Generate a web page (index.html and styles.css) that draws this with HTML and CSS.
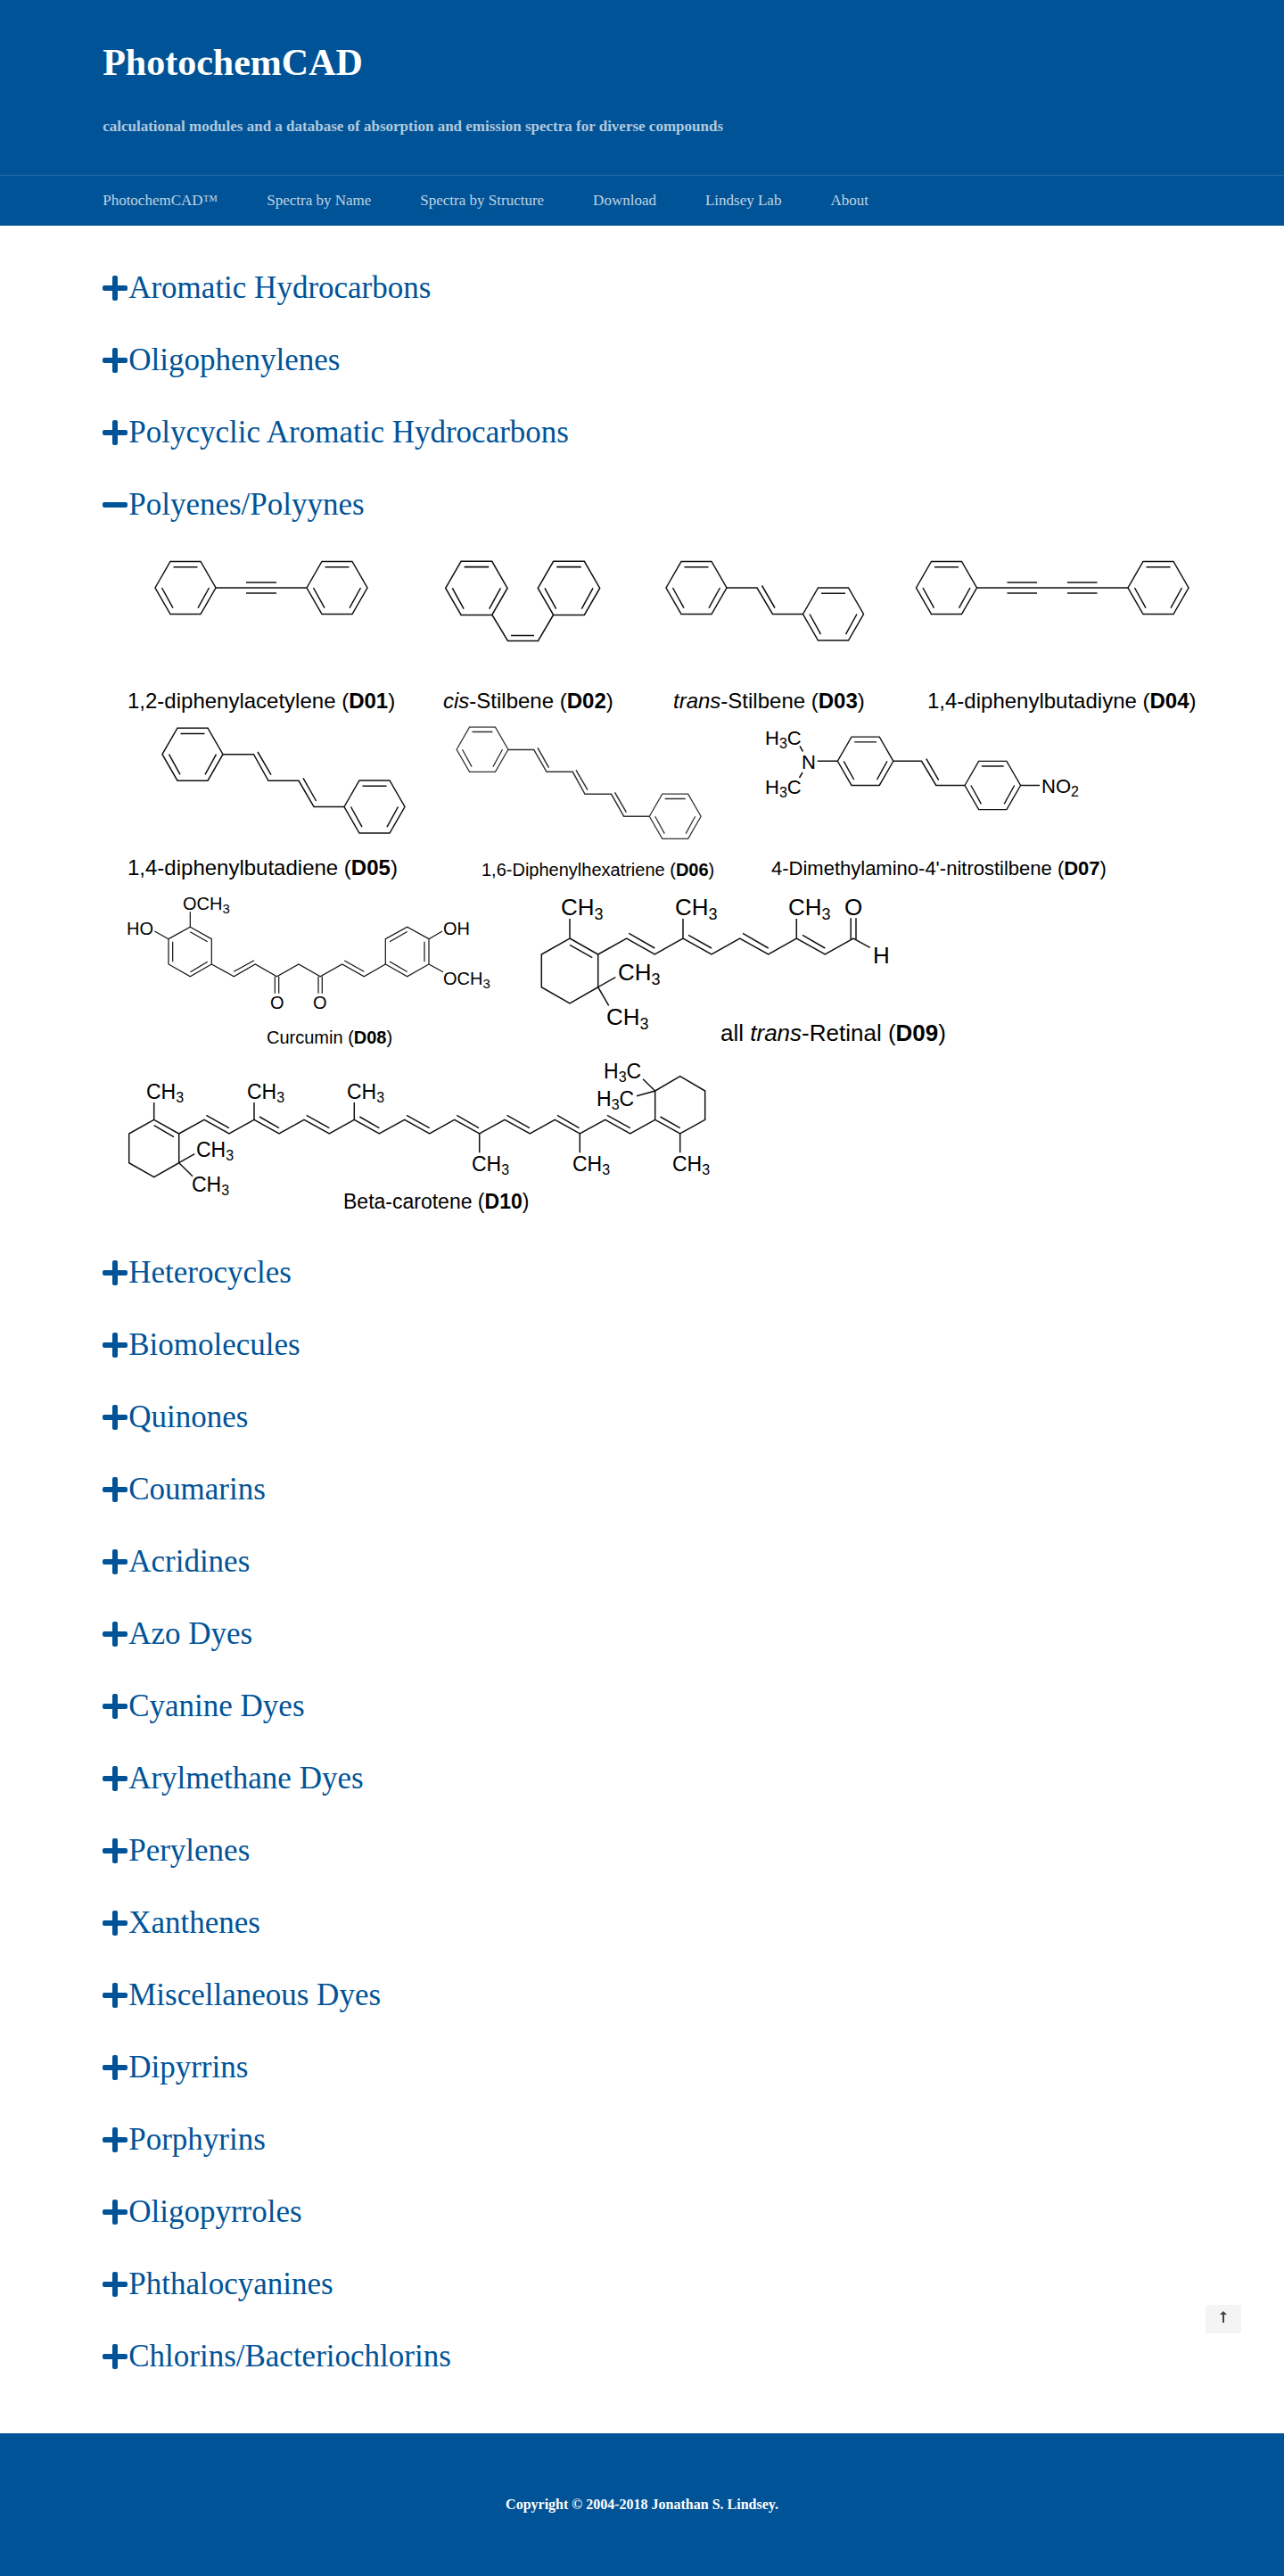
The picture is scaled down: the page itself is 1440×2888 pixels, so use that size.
FILE: index.html
```html
<!DOCTYPE html>
<html lang="en">
<head>
<meta charset="utf-8">
<meta name="viewport" content="width=device-width, initial-scale=1">
<title>PhotochemCAD – Spectra by Structure</title>
<link rel="stylesheet" href="styles.css">
</head>
<body>
<svg class="defs" width="0" height="0" aria-hidden="true">
  <defs>
    <g id="plus"><rect x="0" y="11" width="28" height="6" rx="2"/><rect x="11" y="0" width="6" height="28" rx="2"/></g>
    <g id="minus"><rect x="0" y="11" width="28" height="6" rx="2"/></g>
    <path id="phenyl" d="M-34 0L-17 -29.5H17L34 0L17 29.5H-17ZM-13.5 -23.3H13.5M-26.5 0L-14 22.7M26.5 0L14 22.7"/>
  </defs>
</svg>

<header class="site-header">
  <div class="branding">
    <h1 class="site-title"><a href="#">PhotochemCAD</a></h1>
    <p class="tagline">calculational modules and a database of absorption and emission spectra for diverse compounds</p>
  </div>
  <nav class="site-nav" aria-label="Main">
    <a href="#">PhotochemCAD™</a>
    <a href="#">Spectra by Name</a>
    <a href="#">Spectra by Structure</a>
    <a href="#">Download</a>
    <a href="#">Lindsey Lab</a>
    <a href="#">About</a>
  </nav>
</header>

<main class="content">
  <h2 class="group"><button type="button" aria-expanded="false"><svg class="sign" viewBox="0 0 28 28" aria-hidden="true"><use href="#plus"/></svg>Aromatic Hydrocarbons</button></h2>
  <h2 class="group"><button type="button" aria-expanded="false"><svg class="sign" viewBox="0 0 28 28" aria-hidden="true"><use href="#plus"/></svg>Oligophenylenes</button></h2>
  <h2 class="group"><button type="button" aria-expanded="false"><svg class="sign" viewBox="0 0 28 28" aria-hidden="true"><use href="#plus"/></svg>Polycyclic Aromatic Hydrocarbons</button></h2>
  <h2 class="group"><button type="button" aria-expanded="true" aria-controls="polyenes"><svg class="sign" viewBox="0 0 28 28" aria-hidden="true"><use href="#minus"/></svg>Polyenes/Polyynes</button></h2>

  <div class="gallery" id="polyenes">
    <a href="#"><svg class="mol" width="336" height="189" viewBox="144 618 336 189">
      <use href="#phenyl" x="208" y="659"/><use href="#phenyl" x="378" y="659"/>
      <path d="M242 659H344M276 653H310M276 665H310"/>
      <text class="t24" x="143" y="794">1,2-diphenylacetylene (<tspan class="b">D01</tspan>)</text>
    </svg></a>
    <a href="#"><svg class="mol" width="248" height="189" viewBox="480 618 248 189">
      <use href="#phenyl" transform="translate(534.4 659.4) scale(1.02)"/><use href="#phenyl" transform="translate(638 659.4) scale(1.02)"/>
      <path d="M552 689.5L569.5 718.5H603.5L620.5 689.5M573 712.5H599"/>
      <text class="t24" x="497" y="794"><tspan class="i">cis</tspan>-Stilbene (<tspan class="b">D02</tspan>)</text>
    </svg></a>
    <a href="#"><svg class="mol" width="296" height="189" viewBox="728 618 296 189">
      <use href="#phenyl" x="781" y="659"/><use href="#phenyl" x="934.5" y="688.5"/>
      <path d="M815 659H849L866.5 688.5H900.5M854.5 656.5L869 681.5"/>
      <text class="t24" x="755" y="794"><tspan class="i">trans</tspan>-Stilbene (<tspan class="b">D03</tspan>)</text>
    </svg></a>
    <a href="#"><svg class="mol" width="321" height="189" viewBox="1024 618 321 189">
      <use href="#phenyl" x="1061.5" y="659"/><use href="#phenyl" x="1299" y="659"/>
      <path d="M1095 659H1265M1129.5 653H1163M1129.5 665H1163M1197 653H1230.5M1197 665H1230.5"/>
      <text class="t24" x="1040" y="794">1,4-diphenylbutadiyne (<tspan class="b">D04</tspan>)</text>
    </svg></a>

    <a href="#"><svg class="mol" width="336" height="189" viewBox="144 807 336 189">
      <use href="#phenyl" x="216" y="845.7"/><use href="#phenyl" x="420" y="904.5"/>
      <path d="M250 845.7H284.5L301 875.3H335L352 904.5H386M289 843L304 868.7M340 872.3L354.6 898"/>
      <text class="t24" x="143" y="981">1,4-diphenylbutadiene (<tspan class="b">D05</tspan>)</text>
    </svg></a>
    <a href="#"><svg class="mol soft" width="350" height="189" viewBox="480 807 350 189">
      <use href="#phenyl" transform="translate(541 840.3) scale(.85)"/><use href="#phenyl" transform="translate(757.2 915.3) scale(.85)"/>
      <path d="M570 840.4H598.7L613 865.3H642.3L656 890.3H685.6L699.7 915.3H728.2M603 838.3L615.5 860.7M646 863.3L659 885.6M689.5 888.3L702.4 910.6"/>
      <text class="t20" x="540" y="982">1,6-Diphenylhexatriene (<tspan class="b">D06</tspan>)</text>
    </svg></a>
    <a href="#"><svg class="mol" width="430" height="189" viewBox="830 807 430 189">
      <use href="#phenyl" transform="translate(970.6 853.3) scale(.92)"/><use href="#phenyl" transform="translate(1113.3 880.5) scale(.92)"/>
      <path d="M897 836.5L900.5 842.5M900 866L896.5 872M916.7 853.3H939.2M1002 853.3H1033.5L1049.8 880.5H1082M1038.8 850.7L1052.7 874.7M1145 880.5H1166"/>
      <text class="t22" x="858" y="835">H<tspan class="s16" dy="4">3</tspan><tspan dy="-4">C</tspan></text>
      <text class="t22" x="899" y="862">N</text>
      <text class="t22" x="858" y="890">H<tspan class="s16" dy="4">3</tspan><tspan dy="-4">C</tspan></text>
      <text class="t22" x="1168" y="889">NO<tspan class="s16" dy="4">2</tspan></text>
      <text class="t22" x="865" y="981">4-Dimethylamino-4'-nitrostilbene (<tspan class="b">D07</tspan>)</text>
    </svg></a>

    <a href="#"><svg class="mol thin" width="436" height="189" viewBox="144 996 436 189">
      <path d="M213.3 1039.3L237.3 1052.7V1081L213.3 1094.7L189 1081V1052.7ZM213.3 1044.7L232.7 1055.7M193.7 1055.7V1078.3M213.5 1089.7L232.7 1078.3M213.3 1022.3V1039.3M173.3 1044L189 1052.7"/>
      <path d="M237.3 1081L262.3 1094.7L286.3 1081L310.5 1094.7L335 1081L359.2 1094.7L383.7 1081L408.3 1094.7L432.3 1081M262.3 1089.3L285 1076.7M386.3 1077L408.3 1089.3M308.3 1094.7V1113.7M312.7 1094.7V1113.7M357 1094.7V1113.7M361.3 1094.7V1113.7"/>
      <path d="M432.3 1081V1052.7L456.7 1039.3L481 1052.7V1081L456.7 1094.7ZM437 1055.7L456.7 1044.5M476 1055.7V1078.3M437 1078L456.7 1089.5M481 1052.7L496 1044M481 1081L497 1089.7"/>
      <text class="t20" x="205" y="1020">OCH<tspan class="s15" dy="4">3</tspan></text>
      <text class="t20" x="142" y="1048">HO</text>
      <text class="t20" x="303" y="1131">O</text>
      <text class="t20" x="351" y="1131">O</text>
      <text class="t20" x="497" y="1048">OH</text>
      <text class="t20" x="497" y="1104">OCH<tspan class="s15" dy="4">3</tspan></text>
      <text class="t20" x="299" y="1170">Curcumin (<tspan class="b">D08</tspan>)</text>
    </svg></a>
    <a href="#"><svg class="mol" width="500" height="189" viewBox="580 996 500 189">
      <path d="M639 1052L670.7 1070V1106.7L639 1125L607.3 1106.7V1070ZM639 1059.3L664.3 1073.7M639 1030V1052M690.3 1095.7L670.7 1106.7L682.7 1127.3"/>
      <path d="M670.7 1070L702.7 1052L734.3 1070L766 1052L798 1070L829.7 1052L861.7 1070L893.3 1052L925.3 1070L957 1052L975.7 1062.3M705.3 1046.3L734.3 1063M772 1048.3L798 1063M833 1046.3L861.7 1063M900 1048.3L925.3 1063M766 1030V1052M893.3 1030V1052M954.2 1029.3V1053M960 1029.3V1053"/>
      <text class="t26" x="629" y="1026">CH<tspan class="s18" dy="5">3</tspan></text>
      <text class="t26" x="757" y="1026">CH<tspan class="s18" dy="5">3</tspan></text>
      <text class="t26" x="884" y="1026">CH<tspan class="s18" dy="5">3</tspan></text>
      <text class="t26" x="947" y="1026">O</text>
      <text class="t26" x="979" y="1080">H</text>
      <text class="t26" x="693" y="1099">CH<tspan class="s18" dy="5">3</tspan></text>
      <text class="t26" x="680" y="1149">CH<tspan class="s18" dy="5">3</tspan></text>
      <text class="t26" x="808" y="1167">all <tspan class="i">trans</tspan>-Retinal (<tspan class="b">D09</tspan>)</text>
    </svg></a>

    <a href="#"><svg class="mol" width="670" height="189" viewBox="144 1185 670 189">
      <path d="M172.7 1255.3L200.7 1271V1303.7L172.7 1319.7L144.7 1303.7V1271ZM172.7 1261.7L195 1274.7M172.7 1236V1255.3M218.3 1293.7L200.7 1303.7L216 1318.7"/>
      <path d="M200.7 1271L229 1255.3L257 1271L285 1255.3L313 1271L341 1255.3L369.3 1271L397.3 1255.3L425.3 1271L453.7 1255.3L481.7 1271L509.7 1255.3L537.7 1271L566 1255.3L594.3 1271L622.3 1255.3L650.3 1271L678.7 1255.3L706.7 1271L734.7 1255.3"/>
      <path d="M231.3 1250.3L257 1264.7M291 1252L313 1264.7M343.7 1250.3L369.3 1264.7M403.3 1252L425.3 1264.7M456 1250.3L481.7 1264.7M512.3 1250.3L537 1264.7M568.5 1250.3L594 1264.7M625 1250.3L649.5 1264.7M681 1250.3L706.7 1264.7M740.5 1252L762.7 1264.7"/>
      <path d="M734.7 1255.3V1223L762.7 1206.7L790.7 1223V1255.3L762.7 1271ZM721 1209.7L734.7 1223L714 1228.7M285 1236V1255.3M397.3 1236V1255.3M537.7 1271V1292.3M650.3 1271V1292.3M762.7 1271V1292.3"/>
      <text class="t23" x="164" y="1232">CH<tspan class="s16" dy="4">3</tspan></text>
      <text class="t23" x="277" y="1232">CH<tspan class="s16" dy="4">3</tspan></text>
      <text class="t23" x="389" y="1232">CH<tspan class="s16" dy="4">3</tspan></text>
      <text class="t23" x="220" y="1297">CH<tspan class="s16" dy="4">3</tspan></text>
      <text class="t23" x="215" y="1336">CH<tspan class="s16" dy="4">3</tspan></text>
      <text class="t23" x="529" y="1313">CH<tspan class="s16" dy="4">3</tspan></text>
      <text class="t23" x="642" y="1313">CH<tspan class="s16" dy="4">3</tspan></text>
      <text class="t23" x="754" y="1313">CH<tspan class="s16" dy="4">3</tspan></text>
      <text class="t23" x="677" y="1209">H<tspan class="s16" dy="4">3</tspan><tspan dy="-4">C</tspan></text>
      <text class="t23" x="669" y="1240">H<tspan class="s16" dy="4">3</tspan><tspan dy="-4">C</tspan></text>
      <text class="t23" x="385" y="1355">Beta-carotene (<tspan class="b">D10</tspan>)</text>
    </svg></a>
  </div>

  <h2 class="group"><button type="button" aria-expanded="false"><svg class="sign" viewBox="0 0 28 28" aria-hidden="true"><use href="#plus"/></svg>Heterocycles</button></h2>
  <h2 class="group"><button type="button" aria-expanded="false"><svg class="sign" viewBox="0 0 28 28" aria-hidden="true"><use href="#plus"/></svg>Biomolecules</button></h2>
  <h2 class="group"><button type="button" aria-expanded="false"><svg class="sign" viewBox="0 0 28 28" aria-hidden="true"><use href="#plus"/></svg>Quinones</button></h2>
  <h2 class="group"><button type="button" aria-expanded="false"><svg class="sign" viewBox="0 0 28 28" aria-hidden="true"><use href="#plus"/></svg>Coumarins</button></h2>
  <h2 class="group"><button type="button" aria-expanded="false"><svg class="sign" viewBox="0 0 28 28" aria-hidden="true"><use href="#plus"/></svg>Acridines</button></h2>
  <h2 class="group"><button type="button" aria-expanded="false"><svg class="sign" viewBox="0 0 28 28" aria-hidden="true"><use href="#plus"/></svg>Azo Dyes</button></h2>
  <h2 class="group"><button type="button" aria-expanded="false"><svg class="sign" viewBox="0 0 28 28" aria-hidden="true"><use href="#plus"/></svg>Cyanine Dyes</button></h2>
  <h2 class="group"><button type="button" aria-expanded="false"><svg class="sign" viewBox="0 0 28 28" aria-hidden="true"><use href="#plus"/></svg>Arylmethane Dyes</button></h2>
  <h2 class="group"><button type="button" aria-expanded="false"><svg class="sign" viewBox="0 0 28 28" aria-hidden="true"><use href="#plus"/></svg>Perylenes</button></h2>
  <h2 class="group"><button type="button" aria-expanded="false"><svg class="sign" viewBox="0 0 28 28" aria-hidden="true"><use href="#plus"/></svg>Xanthenes</button></h2>
  <h2 class="group"><button type="button" aria-expanded="false"><svg class="sign" viewBox="0 0 28 28" aria-hidden="true"><use href="#plus"/></svg>Miscellaneous Dyes</button></h2>
  <h2 class="group"><button type="button" aria-expanded="false"><svg class="sign" viewBox="0 0 28 28" aria-hidden="true"><use href="#plus"/></svg>Dipyrrins</button></h2>
  <h2 class="group"><button type="button" aria-expanded="false"><svg class="sign" viewBox="0 0 28 28" aria-hidden="true"><use href="#plus"/></svg>Porphyrins</button></h2>
  <h2 class="group"><button type="button" aria-expanded="false"><svg class="sign" viewBox="0 0 28 28" aria-hidden="true"><use href="#plus"/></svg>Oligopyrroles</button></h2>
  <h2 class="group"><button type="button" aria-expanded="false"><svg class="sign" viewBox="0 0 28 28" aria-hidden="true"><use href="#plus"/></svg>Phthalocyanines</button></h2>
  <h2 class="group"><button type="button" aria-expanded="false"><svg class="sign" viewBox="0 0 28 28" aria-hidden="true"><use href="#plus"/></svg>Chlorins/Bacteriochlorins</button></h2>
</main>

<footer class="site-footer">
  <p>Copyright © 2004-2018 Jonathan S. Lindsey.</p>
</footer>

<button class="to-top" type="button" aria-label="Back to top">
  <svg width="8" height="13" viewBox="0 0 8 13" aria-hidden="true"><path d="M4 0L8 4H5V13H3V4H0Z"/></svg>
</button>
</body>
</html>
```
FILE: styles.css
```css
* { box-sizing: border-box; }

body {
  margin: 0;
  background: #fff;
  color: #000;
  font-family: "Liberation Serif", "Times New Roman", serif;
  font-size: 17px;
  line-height: 24px;
}

h1, h2, p { margin: 0; }
a { color: inherit; text-decoration: none; }
.defs { position: absolute; }

.site-header {
  background: #005397;
  color: #fff;
}

.branding {
  display: flex;
  flex-direction: column;
  gap: 32px;
  padding: 42px 8%;
}

.site-title {
  font-size: 42px;
  line-height: 56px;
  font-weight: 700;
}

.tagline {
  font-weight: 700;
  color: rgba(255, 255, 255, .7);
}

.site-nav {
  display: flex;
  flex-wrap: wrap;
  gap: 0 55px;
  padding: 0 8%;
  border-top: 1px solid rgba(255, 255, 255, .15);
  line-height: 56px;
  color: rgba(255, 255, 255, .75);
}

.content { padding: 29px 6% 46px 8%; }

.group {
  font-size: 35px;
  line-height: 81px;
  font-weight: 400;
}

.group button {
  display: flex;
  align-items: center;
  gap: 1px;
  padding: 0;
  border: 0;
  background: none;
  color: #005397;
  font: inherit;
  text-align: left;
  cursor: pointer;
}

.sign {
  flex: none;
  width: 28px;
  height: 28px;
  fill: #005397;
}

.gallery {
  display: flex;
  flex-wrap: wrap;
  padding: 12px 0 12px 29px;
}

.mol {
  display: block;
  overflow: visible;
  fill: none;
  stroke: #111;
  stroke-width: 1.5;
  font-family: "Liberation Sans", Arial, sans-serif;
}

.mol.soft { stroke: #333; }
.mol.thin { stroke-width: 1.2; }
.mol text { fill: #000; stroke: none; }
.mol .b { font-weight: 700; }
.mol .i { font-style: italic; }
.s15 { font-size: 15px; }
.s16 { font-size: 16px; }
.s18 { font-size: 18px; }
.t20 { font-size: 20px; }
.t22 { font-size: 22px; }
.t23 { font-size: 23px; }
.t24 { font-size: 24px; }
.t26 { font-size: 26px; }

.site-footer {
  padding: 68px 8%;
  background: #005397;
  color: #fff;
  font-size: 16px;
  font-weight: 700;
  text-align: center;
}

.to-top {
  position: fixed;
  right: 48px;
  bottom: 272px;
  display: flex;
  justify-content: center;
  width: 40px;
  height: 32px;
  padding: 7px 0 0;
  border: 0;
  border-radius: 2px;
  background: #f4f4f4;
  fill: #444;
  cursor: pointer;
}
```
